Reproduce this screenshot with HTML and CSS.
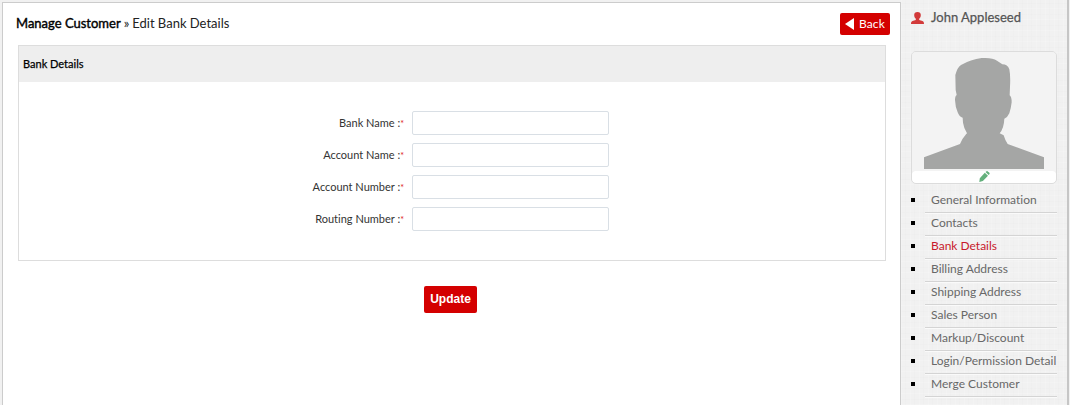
FILE: index.html
```html
<!DOCTYPE html>
<html lang="en">
<head>
<meta charset="utf-8">
<title>Edit Bank Details</title>
<link rel="stylesheet" href="styles.css">
</head>
<body>
<div class="page">
  <main class="main">
    <header class="top">
      <h1 class="crumbs"><b class="crumb-root">Manage Customer</b><span class="sep">»</span><span class="crumb-current">Edit Bank Details</span></h1>
      <a class="back"><svg width="9" height="12" viewBox="0 0 9 12"><path d="M9 0v12L0 6z" fill="#fff"/></svg><span>Back</span></a>
    </header>
    <section class="panel">
      <h2 class="panel-title"><span>Bank Details</span></h2>
      <form class="fields">
        <label class="row"><span class="label"><span>Bank Name :</span><i>*</i></span><input class="input" type="text"></label>
        <label class="row"><span class="label"><span>Account Name :</span><i>*</i></span><input class="input" type="text"></label>
        <label class="row"><span class="label"><span>Account Number :</span><i>*</i></span><input class="input" type="text"></label>
        <label class="row"><span class="label"><span>Routing Number :</span><i>*</i></span><input class="input" type="text"></label>
      </form>
    </section>
    <button class="update" type="button">Update</button>
  </main>
  <aside class="side">
    <div class="user"><svg width="13" height="12" viewBox="0 0 13 12"><path d="M6.500 0C4.300 0 3.200 1.200 3.200 3c0 1.600.6 3 1.600 3.800v1.200L1.500 9C.4 9.400 0 10.300 0 12h13c0-1.700-.4-2.600-1.500-3L8.200 8V6.800C9.200 6 9.800 4.600 9.800 3 9.800 1.200 8.700 0 6.500 0z" fill="#d23a3a"/></svg><span>John Appleseed</span></div>
    <div class="card">
      <div class="photo"><svg width="120" height="111" viewBox="72 54 360 333"><path d="M72 387V352L180 312Q188 294 198 283L201 280Q191 263 189 248L188 233Q178 231 173 217Q166 202 165 180Q165 168 170 165L167 150L166 105Q172 82 183 75Q212 58 245 54Q276 53 291 62L307 73Q323 73 328 88Q332 108 330 140L329 166Q335 170 335 187Q333 205 328 220Q323 232 313 236Q312 264 299 280L311 286Q315 300 323 312L432 352V387Z" fill="#a5a6a5"/></svg></div>
      <div class="edit"><svg width="11" height="11" viewBox="0 0 11 11"><path d="M.3 11L.8 7.200 5.800 1.700 9 4.700 3.900 10.100zM6.500 1L7.500.2Q8.200-.2 8.900.4L10.400 1.800Q10.900 2.500 10.400 3.200L9.600 4z" fill="#63b07c"/></svg></div>
    </div>
    <ul class="menu">
      <li><a>General Information</a></li>
      <li><a>Contacts</a></li>
      <li><a class="active">Bank Details</a></li>
      <li><a>Billing Address</a></li>
      <li><a>Shipping Address</a></li>
      <li><a>Sales Person</a></li>
      <li><a>Markup/Discount</a></li>
      <li><a>Login/Permission Detail</a></li>
      <li><a>Merge Customer</a></li>
    </ul>
  </aside>
</div>
</body>
</html>
```
FILE: styles.css
```css
* { box-sizing: border-box; }
body {
  margin: 0;
  height: 405px;
  overflow: hidden;
  background: #f1f1f1;
  font-family: Lato, "Liberation Sans", sans-serif;
  font-variant-ligatures: none;
}
svg { display: block; flex: none; }
.page { display: flex; height: 405px; padding-left: 2px; }
.main {
  width: 899px;
  margin-top: 2px;
  border: 1px solid #ccc;
  border-bottom: 0;
  background: #fff;
}
.top {
  display: flex;
  justify-content: space-between;
  height: 42px;
  padding: 10px 10px 0 13px;
}
.crumbs {
  display: flex;
  margin: 1px 0 0;
  font-size: 13px;
  line-height: 19px;
  font-weight: 400;
  color: #222;
  white-space: nowrap;
}
.crumb-root { font-weight: 400; color: #000; -webkit-text-stroke: .4px #000; }
.sep { margin: 0 3px; font-size: 13px; }
.back {
  display: flex;
  align-items: center;
  gap: 5px;
  width: 50px;
  height: 22px;
  padding-left: 5px;
  border-radius: 2px;
  background: #d40000;
  color: #fff;
  font-size: 12px;
}
.back span { padding-bottom: 2px; letter-spacing: .1px; }
.panel {
  width: 868px;
  height: 216px;
  margin-left: 15px;
  border: 1px solid #ddd;
}
.panel-title {
  margin: 0;
  height: 36px;
  padding-left: 4px;
  background: #eee;
  font-size: 11px;
  line-height: 35px;
  font-weight: 400;
  color: #000;
  -webkit-text-stroke: .25px #000;
}
.fields { display: flex; flex-direction: column; gap: 8px; padding-top: 29px; }
.row { display: flex; align-items: center; gap: 8px; height: 24px; }
.label {
  width: 385px;
  padding-bottom: 2px;
  text-align: right;
  font-size: 11px;
  color: #333;
  white-space: nowrap;
}
.label i { font-style: normal; font-size: 9px; color: #d22; }
.input {
  width: 197px;
  height: 24px;
  padding: 0 5px;
  border: 1px solid #d9dfe5;
  border-radius: 2px;
  background: #fff;
}
.update {
  display: block;
  width: 53px;
  height: 27px;
  margin: 25px 0 0 421px;
  padding: 0 0 1px;
  border: 0;
  border-radius: 2px;
  background: #d40000;
  color: #fff;
  font: bold 12px/26px "Liberation Sans", sans-serif;
}
.side {
  width: 168px;
  padding: 9px 0 0 10px;
  border-right: 2px solid #c6c6c6;
  background:
    repeating-linear-gradient(90deg, rgba(255,255,255,.16) 0 1px, transparent 1px 4px, rgba(0,0,0,.006) 4px 5px, transparent 5px 9px),
    repeating-linear-gradient(0deg, rgba(255,255,255,.16) 0 1px, transparent 1px 5px, rgba(0,0,0,.006) 5px 6px, transparent 6px 11px),
    #f1f1f1;
}
.user {
  display: flex;
  align-items: center;
  gap: 7px;
  height: 16px;
  font-size: 13px;
  color: #555;
  white-space: nowrap;
  -webkit-text-stroke: .25px #555;
}
.user svg { margin-top: 2px; -webkit-text-stroke: 0; }
.card {
  width: 146px;
  height: 133px;
  margin-top: 26px;
  border: 1px solid #dcdcdc;
  border-radius: 5px;
  overflow: hidden;
}
.photo { display: flex; justify-content: center; height: 119px; padding-top: 6px; background: #f3f3f3; }
.edit { display: flex; justify-content: center; height: 12px; background: #fff; border-radius: 4px; }
.menu { margin: 5px 0 0; padding: 0; list-style: none; }
.menu li {
  display: flex;
  align-items: center;
  gap: 10px;
  height: 23px;
}
.menu li::before { content: ""; width: 4px; height: 4px; margin-bottom: 2px; background: #000; }
.menu a {
  width: 132px;
  height: 24px;
  margin-bottom: -1px;
  padding-left: 6px;
  border-bottom: 1px solid #d4d4d4;
  box-shadow: 0 1px #fafafa;
  font-size: 12px;
  line-height: 22px;
  color: #686868;
  white-space: nowrap;
}
.menu .active { color: #c8192b; }
```
